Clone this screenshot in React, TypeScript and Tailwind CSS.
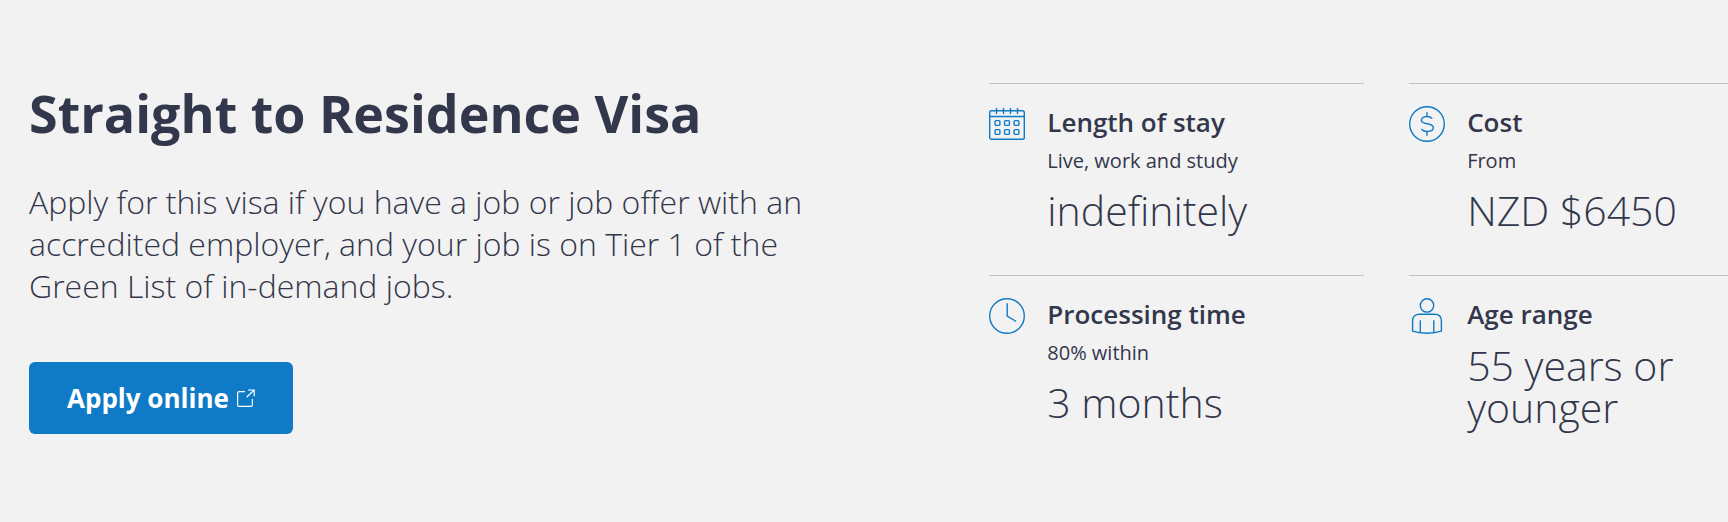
import React from 'react'

const iconProps = {
  width: 36,
  height: 36,
  viewBox: '0 0 36 36',
  fill: 'none',
  stroke: '#0f7ac5',
  strokeWidth: 1.4,
  'aria-hidden': true,
  className: 'shrink-0',
}

const CalendarIcon = () => (
  <svg {...iconProps}>
    <rect x="0.7" y="4.7" width="34.6" height="28.6" rx="1.8" />
    <path d="M0.6 10.5h34.8M7.5 2v6M14.5 2v6M21.5 2v6M28.5 2v6" />
    <rect x="6.1" y="14.6" width="4.8" height="4.8" rx="1" />
    <rect x="15.6" y="14.6" width="4.8" height="4.8" rx="1" />
    <rect x="25.1" y="14.6" width="4.8" height="4.8" rx="1" />
    <rect x="6.1" y="23.6" width="4.8" height="4.8" rx="1" />
    <rect x="15.6" y="23.6" width="4.8" height="4.8" rx="1" />
    <rect x="25.1" y="23.6" width="4.8" height="4.8" rx="1" />
  </svg>
)

const CostIcon = () => (
  <svg {...iconProps}>
    <circle cx="18" cy="18" r="17.3" />
    <path d="M18 6.3v4.2M18 25.5v4.3M23.3 12.6c-1.2-1.3-3-2.1-5.3-2.1-3.3 0-5.7 1.4-5.7 3.7 0 5 12 2.2 12 7.4 0 2.4-2.7 3.9-6.1 3.9-2.6 0-4.5-.9-5.8-2.3" />
  </svg>
)

const ClockIcon = () => (
  <svg {...iconProps}>
    <circle cx="18" cy="18" r="17.3" />
    <path d="M18.2 5.2v13l9 5.3" />
  </svg>
)

const PersonIcon = () => (
  <svg {...iconProps}>
    <circle cx="18" cy="7.4" r="6.7" />
    <path d="M3.6 33.2V22.6c0-4 2.6-6.3 7-6.3h14.8c4.4 0 7 2.3 7 6.3v10.6c-8 2.8-20.8 2.8-28.8 0zM11.3 22.3v12.2M24.8 22.3v12.2" />
  </svg>
)

const ExternalIcon = () => (
  <svg width="18" height="18" viewBox="0 0 18 18" fill="none" stroke="currentColor" strokeWidth="1.2" aria-hidden="true">
    <path d="M8 2.6H2.2c-.9 0-1.6.7-1.6 1.6v11.6c0 .9.7 1.6 1.6 1.6h11.6c.9 0 1.6-.7 1.6-1.6V10M11 1h6.2v6.2M17.2 1L9.6 8.2" />
  </svg>
)

const facts = [
  { title: 'Length of stay', note: 'Live, work and study', value: 'indefinitely', Icon: CalendarIcon },
  { title: 'Cost', note: 'From', value: 'NZD $6450', Icon: CostIcon },
  { title: 'Processing time', note: '80% within', value: '3 months', Icon: ClockIcon },
  { title: 'Age range', note: '', value: '55 years or younger', Icon: PersonIcon },
]

const Fact = ({ title, note, value, Icon }) => (
  <div className="flex min-h-48 items-start gap-[22px] border-t border-[#c1c1c1] pt-[22px]">
    <Icon />
    <div className="min-w-0">
      <h2 className="text-[26px] leading-8 font-semibold">{title}</h2>
      {note && <p className="pt-[9px] text-xl leading-7">{note}</p>}
      <p className="pt-[14px] text-[41px] leading-[42px] font-light">{value}</p>
    </div>
  </div>
)

const App = () => (
  <main className="flex min-h-[522px] overflow-x-hidden bg-[#f2f2f2] pt-[83px] font-['Open_Sans',sans-serif] text-[#32374b]">
    <section className="w-[57.25%] shrink-0 pr-32 pl-[29px]">
      <h1 className="text-[52px] leading-15 font-bold">Straight to Residence Visa</h1>
      <p className="mt-[38px] text-[32px] leading-[42px] font-light">
        Apply for this visa if you have a job or job offer with an accredited employer, and your job is on Tier 1 of the
        Green List of in-demand jobs.
      </p>
      <a
        href="#apply"
        className="mt-[55px] inline-flex h-[72px] items-center gap-2 rounded-md bg-[#0f7ac5] px-[38px] text-[26px] font-bold text-white"
      >
        Apply online
        <ExternalIcon />
      </a>
    </section>
    <section className="-mr-14 grid flex-1 grid-cols-2 content-start gap-x-[45px]">
      {facts.map((fact) => (
        <Fact key={fact.title} {...fact} />
      ))}
    </section>
  </main>
)

export default App
